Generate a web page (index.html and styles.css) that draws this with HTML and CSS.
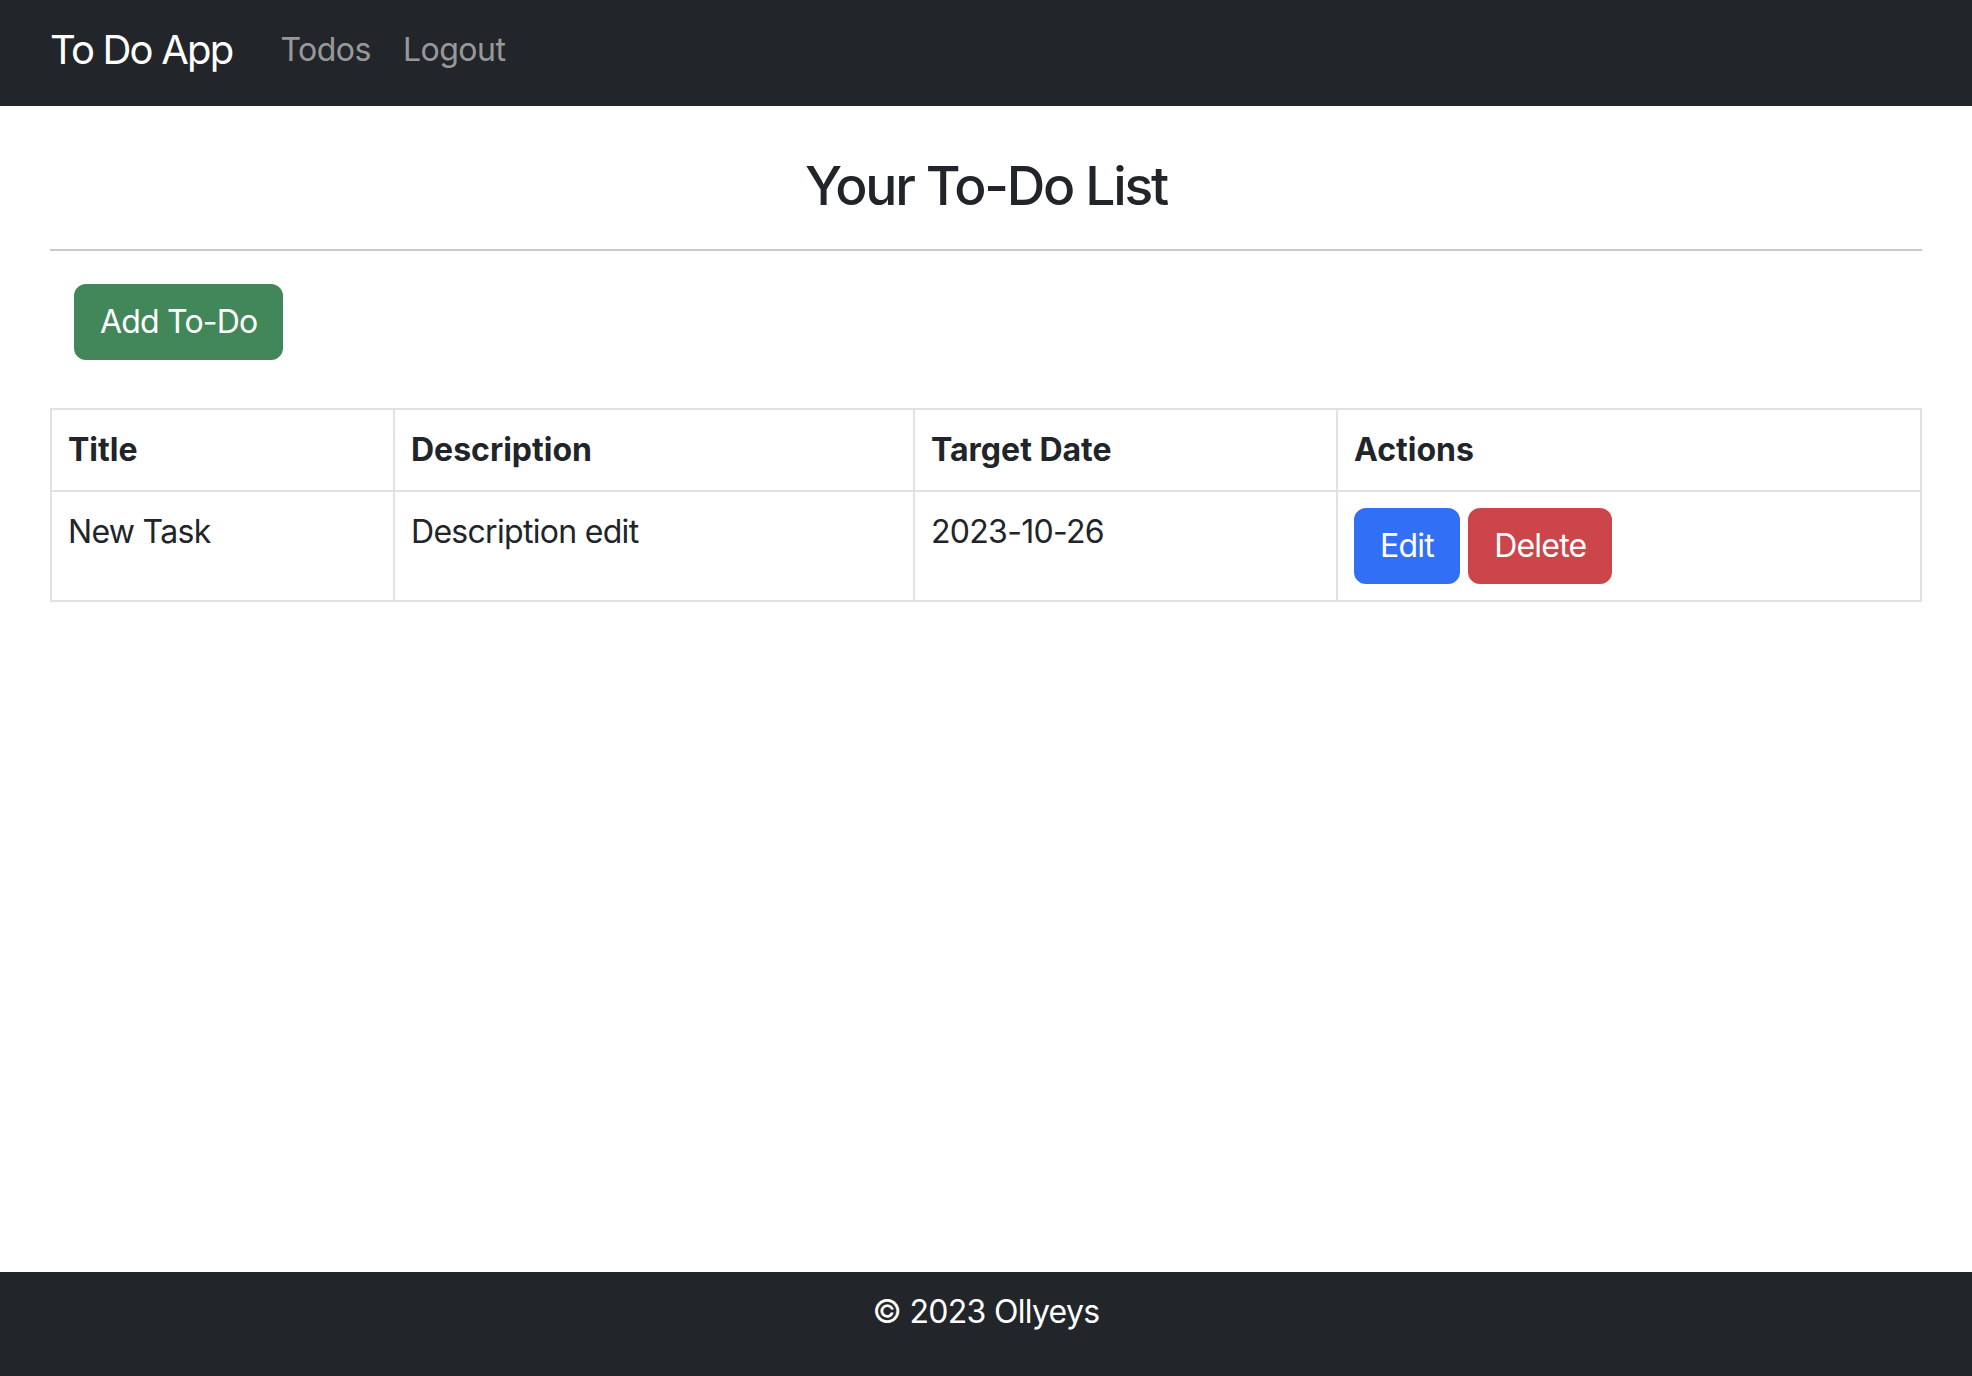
FILE: index.html
```html
<!DOCTYPE html>
<html lang="en">
<head>
<meta charset="utf-8">
<title>To Do App</title>
<link rel="stylesheet" href="styles.css">
</head>
<body>
<nav class="navbar">
  <a class="brand" href="#">To Do App</a>
  <ul class="nav-links">
    <li><a class="nav-link" href="#">Todos</a></li>
    <li><a class="nav-link" href="#">Logout</a></li>
  </ul>
</nav>
<main class="content">
  <h3 class="page-title">Your To-Do List</h3>
  <hr class="divider">
  <div class="toolbar">
    <a class="btn btn-success" href="#">Add To-Do</a>
  </div>
  <table class="todo-table">
    <thead>
      <tr>
        <th class="col-title">Title</th>
        <th class="col-desc">Description</th>
        <th class="col-date">Target Date</th>
        <th class="col-actions">Actions</th>
      </tr>
    </thead>
    <tbody>
      <tr>
        <td>New Task</td>
        <td>Description edit</td>
        <td>2023-10-26</td>
        <td><a class="btn btn-primary" href="#">Edit</a> <a class="btn btn-danger" href="#">Delete</a></td>
      </tr>
    </tbody>
  </table>
</main>
<footer class="footer">© 2023 Ollyeys</footer>
</body>
</html>
```
FILE: styles.css
```css
* { box-sizing: border-box; }
html, body { height: 100%; }
body {
  margin: 0;
  font-family: Inter, "Noto Sans", "Liberation Sans", sans-serif;
  font-size: 32px;
  line-height: 48px;
  letter-spacing: -0.7px;
  color: #212529;
  background: #fff;
  display: flex;
  flex-direction: column;
  min-height: 100vh;
}
a { text-decoration: none; }

.navbar {
  height: 106px;
  flex: none;
  background: #222529;
  display: flex;
  align-items: center;
  padding: 0 50px 6px;
}
.brand {
  color: #fff;
  font-size: 40px;
  line-height: 60px;
  letter-spacing: -1.8px;
  margin-right: 32px;
}
.nav-links {
  display: flex;
  list-style: none;
  margin: 0;
  padding: 0;
}
.nav-link {
  display: block;
  padding: 0 16px;
  color: rgba(255, 255, 255, 0.55);
  font-size: 32px;
  line-height: 48px;
  letter-spacing: -0.5px;
}

.content {
  flex: 1;
  padding: 0 50px;
}
.page-title {
  margin: 48px 0 0;
  text-align: center;
  font-size: 53.4px;
  line-height: 64px;
  font-weight: 500;
  letter-spacing: -2.2px;
}
.divider {
  margin: 31px 0 0;
  border: 0;
  border-top: 2px solid #c8c9ca;
  height: 0;
}
.toolbar {
  padding: 33px 24px 0;
}
.btn {
  display: inline-block;
  padding: 12px 24px;
  border: 2px solid transparent;
  border-radius: 12px;
  color: #fff;
  font-size: 32px;
  line-height: 48px;
  letter-spacing: -0.8px;
  vertical-align: middle;
}
.btn-success { background: #428759; border-color: #428759; }
.btn-primary { background: #3170f5; border-color: #3170f5; }
.btn-danger { background: #cb454b; border-color: #cb454b; }

.todo-table {
  margin-top: 48px;
  width: 100%;
  border-collapse: collapse;
  vertical-align: top;
}
.todo-table th,
.todo-table td {
  border: 2px solid #dfe2e6;
  padding: 16px;
  text-align: left;
  vertical-align: top;
}
.todo-table th { font-weight: 700; letter-spacing: 0; }
.col-title { width: 343px; }
.col-desc { width: 520px; }
.col-date { width: 423px; }

.footer {
  flex: none;
  height: 104px;
  background: #222529;
  color: #fff;
  text-align: center;
  padding-top: 16px;
}
```
